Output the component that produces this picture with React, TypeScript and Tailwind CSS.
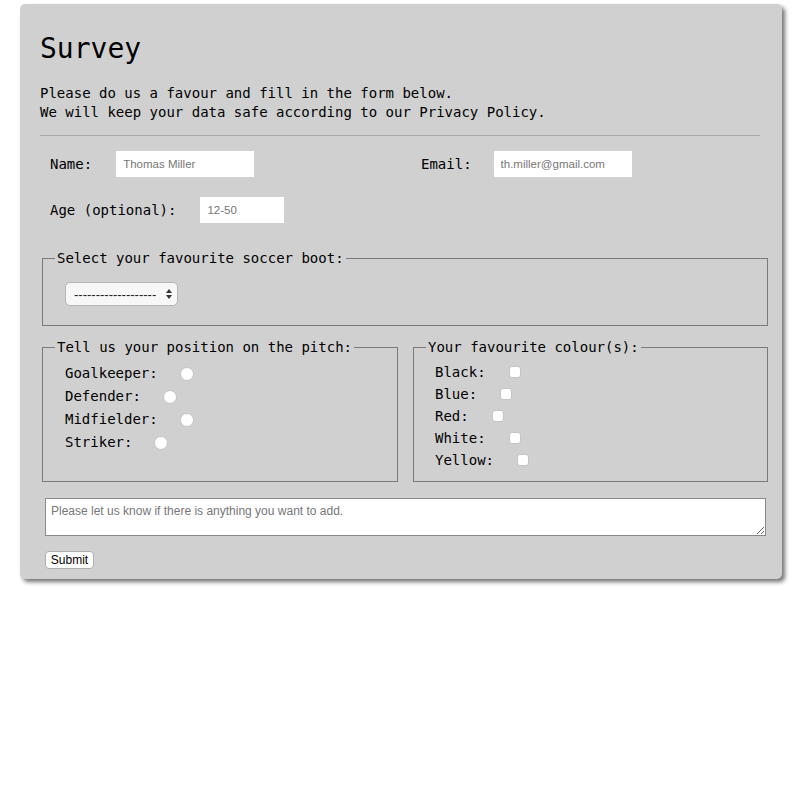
import { useState } from "react";

const mono = { fontFamily: '"DejaVu Sans Mono", monospace' };
const sans = { fontFamily: '"Liberation Sans", Arial, sans-serif' };

const positions = ["Goalkeeper", "Defender", "Midfielder", "Striker"];
const colours = ["Black", "Blue", "Red", "White", "Yellow"];

const Survey = () => {
  const [pos, setPos] = useState("");
  return (
    <div className="bg-white min-h-[800px] pt-[4px] pl-[20px]" style={mono}>
      <div className="w-[762px] h-[575px] bg-[#d0d0d0] rounded-[5px] shadow-[3px_3px_4px_rgba(0,0,0,0.55)] pt-[28px] pl-[20px] pr-[22px] text-black">
        <h1 className="text-[28px] leading-[33px]">Survey</h1>
        <p className="mt-[19px] text-[14px] leading-[19px]">
          Please do us a favour and fill in the form below.
          <br />
          We will keep your data safe according to our Privacy Policy.
        </p>
        <div className="mt-[13px] border-t border-[#a8a8a8]"></div>

        <form className="text-[14px] leading-[19px]" onSubmit={(e) => e.preventDefault()}>
          <div className="flex mt-[15px] pl-[10px] h-[26px] items-center">
            <div className="flex items-center w-[371px] gap-[24px]">
              <label>Name:</label>
              <input
                className="w-[138px] h-[26px] bg-white px-[7px] text-[11.5px] outline-none placeholder:text-[#777]"
                style={sans}
                placeholder="Thomas Miller"
              />
            </div>
            <div className="flex items-center gap-[22px]">
              <label>Email:</label>
              <input
                className="w-[138px] h-[26px] bg-white px-[7px] text-[11.5px] outline-none placeholder:text-[#777]"
                style={sans}
                placeholder="th.miller@gmail.com"
              />
            </div>
          </div>

          <div className="flex mt-[20px] pl-[10px] h-[26px] items-center gap-[24px]">
            <label>Age (optional):</label>
            <input
              className="w-[84px] h-[26px] bg-white px-[7px] text-[11.5px] outline-none placeholder:text-[#777]"
              style={sans}
              placeholder="12-50"
            />
          </div>

          <fieldset className="mt-[26px] ml-[2px] w-[726px] border border-[#7a7a7a] px-[12px] pb-[19px]">
            <legend className="px-[2px]">Select your favourite soccer boot:</legend>
            <div className="relative mt-[14px] ml-[10px] w-[113px] h-[24px]">
              <select
                className="appearance-none w-full h-full rounded-[5px] border border-[#b5b5b5] bg-[#f7f7f7] pl-[8px] text-[13px] text-[#222] outline-none"
                style={sans}
              >
                <option>-------------------</option>
                <option>Nike</option>
                <option>Adidas</option>
                <option>Puma</option>
              </select>
              <svg className="absolute right-[6px] top-[7px]" width="6" height="10" viewBox="0 0 6 10">
                <path d="M3 0 L6 4 L0 4 Z M0 6 L6 6 L3 10 Z" fill="#333" />
              </svg>
            </div>
          </fieldset>

          <div className="flex gap-[15px] mt-[12px] ml-[2px] w-[726px]">
            <fieldset className="w-[356px] border border-[#7a7a7a] px-[12px] pb-[27px]">
              <legend className="px-[2px]">Tell us your position on the pitch:</legend>
              <div className="mt-[5px] ml-[10px]">
                {positions.map((p) => (
                  <label key={p} className="flex items-center h-[23px]">
                    <span>{p}:</span>
                    <input
                      type="radio"
                      name="pos"
                      checked={pos === p}
                      onChange={() => setPos(p)}
                      className="appearance-none ml-[22px] w-[14px] h-[14px] rounded-full bg-white border border-[#c4c4c4] checked:border-[4px] checked:border-[#3b82f6]"
                    />
                  </label>
                ))}
              </div>
            </fieldset>
            <fieldset className="w-[355px] border border-[#7a7a7a] px-[12px] pb-[10px]">
              <legend className="px-[2px]">Your favourite colour(s):</legend>
              <div className="mt-[4px] ml-[9px]">
                {colours.map((c) => (
                  <label key={c} className="flex items-center h-[22px]">
                    <span>{c}:</span>
                    <input
                      type="checkbox"
                      className="appearance-none ml-[23px] w-[12px] h-[12px] rounded-[3px] bg-white border border-[#c4c4c4] checked:bg-[#3b82f6]"
                    />
                  </label>
                ))}
              </div>
            </fieldset>
          </div>

          <textarea
            className="block mt-[16px] ml-[5px] w-[721px] h-[38px] bg-white border border-[#8a8a8a] px-[5px] pt-[5px] text-[12px] leading-[14px] outline-none placeholder:text-[#777]"
            style={sans}
            placeholder="Please let us know if there is anything you want to add."
          ></textarea>

          <button
            type="submit"
            className="block mt-[15px] ml-[5px] w-[49px] h-[18px] bg-white border border-[#adadad] rounded-[4px] text-[12px] leading-[16px] text-black"
            style={sans}
          >
            Submit
          </button>
        </form>
      </div>
    </div>
  );
};

export default Survey;
